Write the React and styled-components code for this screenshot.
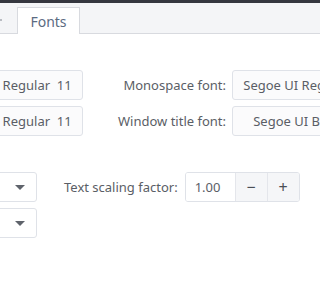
import React from "react";
import styled, { createGlobalStyle } from "styled-components";

const Global = createGlobalStyle`
  html, body {
    margin: 0;
    padding: 0;
    background: #ffffff;
    overflow: hidden;
  }
  body {
    width: 320px;
    height: 285px;
    font-family: "Noto Sans", "Open Sans", sans-serif;
    font-size: 13px;
    color: #5a5e66;
  }
`;

const Page = styled.div`
  width: 320px;
  height: 285px;
  overflow: hidden;
  display: flex;
  flex-direction: column;
`;

const TopStrip = styled.div`
  height: 3px;
  background: #35373f;
`;

const TabBar = styled.div`
  height: 30px;
  background: #f4f5f7;
  border-bottom: 1px solid #d8dadf;
  display: flex;
  align-items: flex-end;
  padding-left: 17px;
  position: relative;
`;

const Stub = styled.span`
  position: absolute;
  left: 0;
  top: 16px;
  width: 2px;
  height: 2px;
  background: #b9bcc2;
`;

const Tab = styled.div`
  width: 63px;
  height: 26px;
  background: #ffffff;
  border: 1px solid #d8dadf;
  border-bottom: none;
  margin-bottom: -1px;
  display: flex;
  align-items: center;
  justify-content: center;
  font-size: 14px;
  color: #5b6b82;
  box-sizing: border-box;
  height: 27px;
`;

const Body = styled.div`
  padding-top: 36px;
  display: flex;
  flex-direction: column;
  gap: 36px;
`;

const FontGrid = styled.div`
  display: grid;
  grid-template-columns: 150px 137px 150px;
  grid-auto-rows: 30px;
  column-gap: 6px;
  row-gap: 6px;
  margin-left: -67px;
`;

const Label = styled.div`
  display: flex;
  align-items: center;
  justify-content: ${(p) => (p.$end ? "flex-end" : "flex-start")};
  white-space: nowrap;
  color: #5a5e66;
`;

const FontButton = styled.div`
  border: 1px solid #dfe2e8;
  border-radius: 3px;
  background: #fbfbfc;
  display: flex;
  align-items: center;
  justify-content: center;
  white-space: pre;
  color: #5a5e66;
  box-sizing: border-box;
`;

const ScaleGrid = styled.div`
  display: grid;
  grid-template-columns: 120px auto;
  grid-auto-rows: 30px;
  column-gap: 27px;
  row-gap: 6px;
  margin-left: -83px;
`;

const Select = styled.div`
  border: 1px solid #dfe2e8;
  border-radius: 3px;
  background: #ffffff;
  display: flex;
  align-items: center;
  justify-content: flex-end;
  padding-right: 11px;
  box-sizing: border-box;
`;

const Caret = styled.span`
  width: 0;
  height: 0;
  border-left: 5px solid transparent;
  border-right: 5px solid transparent;
  border-top: 5px solid #5f636b;
`;

const ScaleRow = styled.div`
  display: flex;
  align-items: center;
  gap: 7px;
`;

const Spin = styled.div`
  display: flex;
  height: 30px;
  border: 1px solid #dfe2e8;
  border-radius: 3px;
  box-sizing: border-box;
  overflow: hidden;
`;

const SpinInput = styled.div`
  width: 49px;
  padding-left: 9px;
  box-sizing: border-box;
  display: flex;
  align-items: center;
  background: #ffffff;
  color: #5a5e66;
`;

const SpinButton = styled.div`
  width: 31px;
  display: flex;
  align-items: center;
  justify-content: center;
  background: #f5f6f8;
  border-left: 1px solid #e4e6eb;
  font-size: 16px;
  color: #4a4e56;
`;

export default function App() {
  return (
    <Page>
      <Global />
      <TopStrip />
      <TabBar>
        <Stub />
        <Tab>Fonts</Tab>
      </TabBar>
      <Body>
        <FontGrid>
          <FontButton>Segoe UI Regular  11</FontButton>
          <Label $end>Monospace font:</Label>
          <FontButton>Segoe UI Regular  11</FontButton>
          <FontButton>Segoe UI Regular  11</FontButton>
          <Label $end>Window title font:</Label>
          <FontButton>Segoe UI Bold  11</FontButton>
        </FontGrid>
        <ScaleGrid>
          <Select>
            <Caret />
          </Select>
          <ScaleRow>
            <Label>Text scaling factor:</Label>
            <Spin>
              <SpinInput>1.00</SpinInput>
              <SpinButton>−</SpinButton>
              <SpinButton>+</SpinButton>
            </Spin>
          </ScaleRow>
          <Select>
            <Caret />
          </Select>
        </ScaleGrid>
      </Body>
    </Page>
  );
}
